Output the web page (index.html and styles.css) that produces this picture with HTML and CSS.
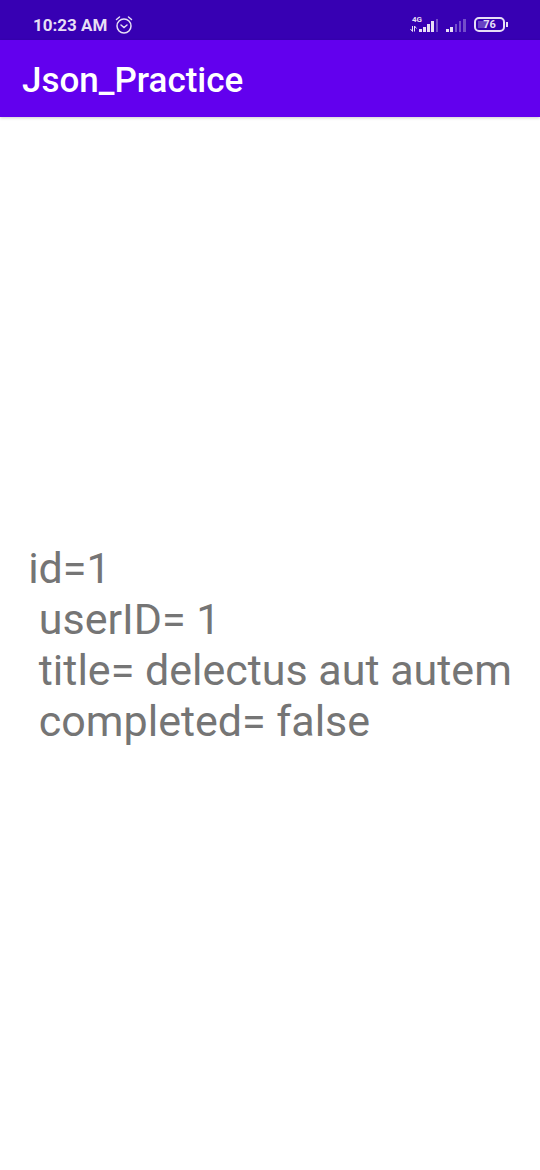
FILE: index.html
```html
<!DOCTYPE html>
<html lang="en">
<head>
<meta charset="utf-8">
<meta name="viewport" content="width=device-width, initial-scale=1">
<title>Json_Practice</title>
<link rel="stylesheet" href="styles.css">
</head>
<body>
<div class="status-bar">
  <div class="status-left">
    <span class="clock">10:23 AM</span>
    <svg width="18" height="20" viewBox="0 0 18 20" fill="none" stroke="currentColor" stroke-width="1.5" stroke-linecap="round"><circle cx="9" cy="11" r="7"/><path d="M1.500 4.500 4.500 2M16.500 4.500 13.500 2M6 10l3 2.500 3-2.500"/></svg>
  </div>
  <div class="status-right">
    <div class="network">
      <span class="network-type">4G</span>
      <svg width="28" height="14" viewBox="0 0 28 14" fill="currentColor"><path fill="none" stroke="currentColor" d="M2.500 8v5.500M.5 11l2 2.500M4.500 13.500V8l2 2.500"/><path d="M9 11h3v3H9zM13 9h3v5h-3zM17 6h3v8h-3zM21 3h3v11h-3z"/><path opacity=".35" d="M26 1h2v13h-2z"/></svg>
    </div>
    <svg width="20" height="14" viewBox="0 0 20 14" fill="currentColor"><path d="M0 11h3v3H0zM4 9h3v5H4z"/><path opacity=".35" d="M9 6h2v8H9zM13 3h2v11h-2zM17 1h3v13h-3z"/></svg>
    <div class="battery">76</div>
  </div>
</div>
<header class="app-bar"><h1 class="app-title">Json_Practice</h1></header>
<main class="content"><p class="result">id=1
 userID= 1
 title= delectus aut autem
 completed= false</p></main>
</body>
</html>
```
FILE: styles.css
```css
* { box-sizing: border-box; }
body {
  margin: 0;
  min-height: 100vh;
  display: flex;
  flex-direction: column;
  background: #fff;
  font-family: Roboto, "Liberation Sans", sans-serif;
}
.status-bar {
  height: 40px;
  padding: 9px 35px 0 33px;
  display: flex;
  justify-content: space-between;
  align-items: center;
  background: #3700b3;
  color: #e6dff5;
}
.status-left, .status-right { display: flex; align-items: center; gap: 8px; }
.clock { font: 700 17px/20px Roboto, sans-serif; }
.status-right svg { display: block; }
.network { position: relative; }
.network-type {
  position: absolute;
  left: 2px;
  top: -2px;
  font: 700 8px/8px Roboto, sans-serif;
}
.battery {
  position: relative;
  width: 31px;
  height: 15px;
  border: 2px solid;
  border-radius: 5px;
  background: linear-gradient(#6842c4, #6842c4) 2px 2px / 9px 7px no-repeat;
  font: 700 11px/12px Roboto, sans-serif;
  text-align: center;
}
.battery::after {
  content: "";
  position: absolute;
  right: -5px;
  top: 3px;
  width: 2px;
  height: 5px;
  background: currentColor;
}
.app-bar {
  height: 77px;
  padding: 4px 22px 0;
  display: flex;
  align-items: center;
  background: #6200ee;
  color: #fff;
  box-shadow: 0 1px 3px rgba(0, 0, 0, .2);
}
.app-title { margin: 0; font-size: 35px; font-weight: 500; }
.content { flex: 1; display: flex; align-items: center; justify-content: center; padding-top: 3px; }
.result {
  margin: 0;
  white-space: pre-wrap;
  color: #757575;
  font-size: 43px;
  line-height: 51px;
}
```
